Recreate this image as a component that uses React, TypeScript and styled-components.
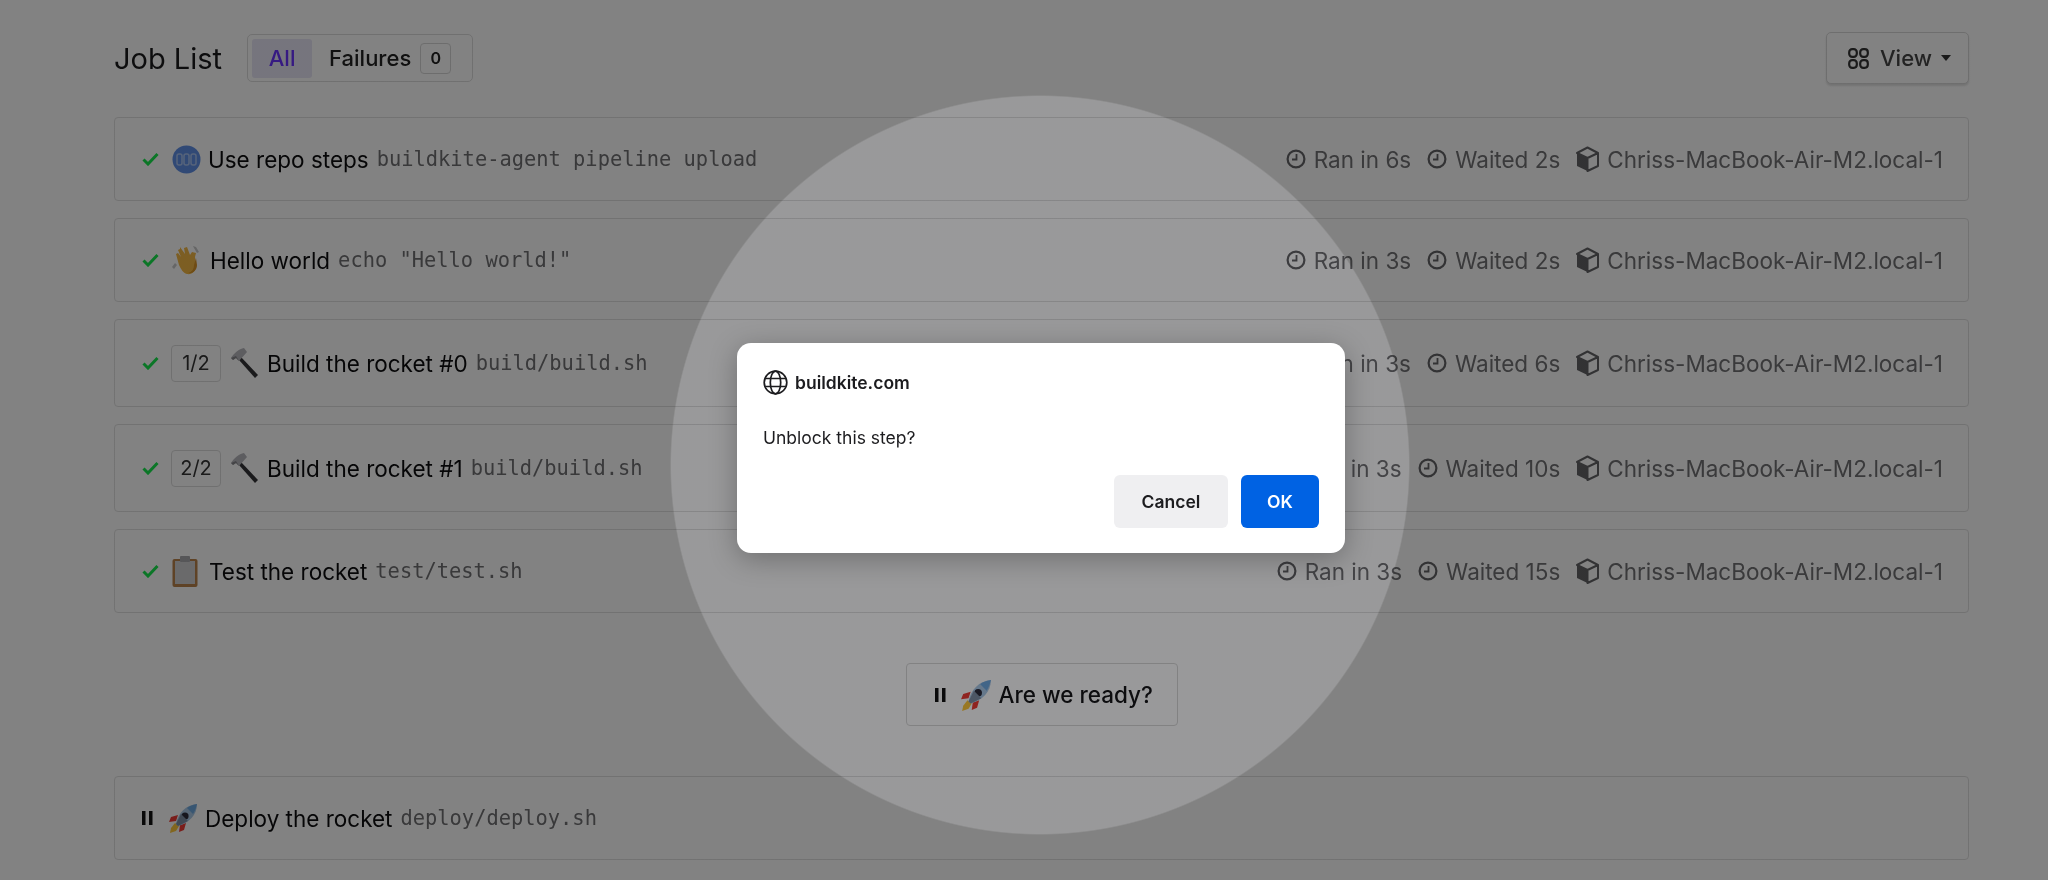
import React from "react";
import styled, { createGlobalStyle } from "styled-components";

const Global = createGlobalStyle`
  html, body { margin: 0; padding: 0; background: #fff; }
  * { box-sizing: border-box; }
`;

const Stage = styled.div`
  position: relative;
  width: 2048px;
  height: 880px;
  overflow: hidden;
  background: #fff;
  font-family: Inter, "Liberation Sans", sans-serif;
  color: #0c0c0e;
  filter: blur(0.55px);
`;

const Page = styled.main`
  display: flex;
  flex-direction: column;
  padding: 32px 79px 0 114px;
`;

const Header = styled.header`
  display: flex;
  align-items: center;
  height: 52px;
  margin-bottom: 33px;
`;

const Title = styled.h1`
  margin: 0 25px 0 0;
  font-size: 29px;
  font-weight: 400;
  line-height: 1;
  color: #1a1a1c;
`;

const Tabs = styled.div`
  display: flex;
  align-items: center;
  width: 226px;
  height: 48px;
  padding: 0 4px;
  border: 1px solid #dcdcdc;
  border-radius: 5px;
`;

const TabAll = styled.span`
  display: flex;
  align-items: center;
  justify-content: center;
  width: 60px;
  height: 39px;
  background: #e7e5f6;
  border-radius: 3px;
  color: #6a32ff;
  font-size: 22px;
  font-weight: 500;
`;

const TabLabel = styled.span`
  margin-left: 17px;
  font-size: 22px;
  font-weight: 500;
  color: #222;
`;

const CountBadge = styled.span`
  display: flex;
  align-items: center;
  justify-content: center;
  width: 31px;
  height: 31px;
  margin-left: 9px;
  border: 1px solid #d6d6d6;
  border-radius: 4px;
  font-size: 16px;
  font-weight: 600;
  color: #222;
`;

const ViewButton = styled.button`
  display: flex;
  align-items: center;
  width: 143px;
  height: 52px;
  margin-left: auto;
  padding: 0 0 0 21px;
  background: #fff;
  border: 1px solid #d8d8d8;
  border-radius: 5px;
  box-shadow: 0 2px 2px rgba(0, 0, 0, 0.12);
  font: 500 22px Inter, "Liberation Sans", sans-serif;
  color: #444;
`;

const ViewLabel = styled.span`
  margin-left: 11px;
`;

const Caret = styled.span`
  width: 0;
  height: 0;
  margin-left: 9px;
  border-left: 5.5px solid transparent;
  border-right: 5.5px solid transparent;
  border-top: 6px solid #333;
`;

const List = styled.div`
  display: flex;
  flex-direction: column;
  gap: 17px;
`;

const Row = styled.div<{ $tall?: boolean }>`
  display: flex;
  align-items: center;
  height: ${(p) => (p.$tall ? 88 : 84)}px;
  padding: 0 25px 0 27px;
  border: 1px solid #e0e0e0;
  border-radius: 4px;
`;

const StepName = styled.span<{ $gap?: number }>`
  margin-left: ${(p) => p.$gap ?? 7}px;
  font-size: 22.5px;
  font-weight: 400;
  white-space: nowrap;
`;

const Command = styled.code`
  margin-left: 8px;
  font-family: "DejaVu Sans Mono", "Liberation Mono", monospace;
  font-size: 20.4px;
  color: #6f6f72;
  white-space: nowrap;
`;

const Counter = styled.span`
  display: flex;
  align-items: center;
  justify-content: center;
  width: 50px;
  height: 37px;
  margin: 0 9px 0 12px;
  border: 1px solid #dcdcdc;
  border-radius: 4px;
  font-size: 20px;
  color: #333;
`;

const Meta = styled.div`
  display: flex;
  align-items: center;
  margin-left: auto;
  color: #717174;
  font-size: 22.5px;
  white-space: nowrap;
`;

const MetaItem = styled.span`
  display: flex;
  align-items: center;
  gap: 8px;
  margin-left: 16px;
`;

const EmojiSlot = styled.span<{ $left: number }>`
  display: flex;
  margin-left: ${(p) => p.$left}px;
`;

const Center = styled.div`
  display: flex;
  justify-content: center;
  margin: 50px 0;
`;

const BlockButton = styled.button`
  display: flex;
  align-items: center;
  width: 272px;
  height: 63px;
  padding: 0 0 0 28px;
  background: #fff;
  border: 1px solid #d8d8d8;
  border-radius: 4px;
  font: 500 22.5px Inter, "Liberation Sans", sans-serif;
  color: #151517;
`;

const BlockLabel = styled.span`
  margin-left: 7px;
  white-space: nowrap;
`;

const Backdrop = styled.div`
  position: absolute;
  inset: 0;
  background: radial-gradient(
    circle 370px at 1040px 465px,
    rgba(0, 0, 3, 0.4) 99.6%,
    rgba(0, 0, 0, 0.49) 100%
  );
`;

const Dialog = styled.section`
  position: absolute;
  left: 737px;
  top: 343px;
  width: 608px;
  height: 210px;
  display: flex;
  flex-direction: column;
  padding: 26px;
  background: #fff;
  border-radius: 14px;
  box-shadow: 0 6px 28px rgba(0, 0, 0, 0.28);
  color: #1c1c1f;
`;

const DialogHead = styled.div`
  display: flex;
  align-items: center;
  gap: 7px;
  height: 27px;
  font-size: 17.5px;
  font-weight: 600;
`;

const DialogText = styled.p`
  margin: 28px 0 0;
  font-size: 17.5px;
  line-height: 28px;
`;

const DialogActions = styled.div`
  display: flex;
  justify-content: flex-end;
  gap: 13px;
  margin-top: auto;
  margin-bottom: -1px;
`;

const DialogButton = styled.button<{ $primary?: boolean }>`
  height: 53px;
  width: ${(p) => (p.$primary ? 78 : 114)}px;
  border: 0;
  border-radius: 6px;
  background: ${(p) => (p.$primary ? "#0062e3" : "#efeff1")};
  color: ${(p) => (p.$primary ? "#fff" : "#1c1c1f")};
  font: 600 17.5px Inter, "Liberation Sans", sans-serif;
`;

const Check = () => (
  <svg width="17" height="14" viewBox="0 0 17 14" fill="none">
    <path d="M1.5 7.5 6 12 15.5 2" stroke="#16e84c" strokeWidth="3" />
  </svg>
);

const Pause = () => (
  <svg width="11" height="14" viewBox="0 0 11 14" fill="#111">
    <rect x="0" y="0" width="3.5" height="14" />
    <rect x="7" y="0" width="3.5" height="14" />
  </svg>
);

const Clock = () => (
  <svg width="20" height="20" viewBox="0 0 20 20" fill="none" stroke="#636366" strokeWidth="2.2">
    <circle cx="10" cy="10" r="8.4" />
    <path d="M10.5 5v5.5H6" strokeWidth="1.8" />
  </svg>
);

const Cube = () => (
  <svg width="23" height="26" viewBox="0 0 23 26">
    <path d="M11.5 12 1 7v13l10.5 5z" fill="#636366" />
    <path d="M11.5 12 22 7v13l-10.5 5zM1 7l10.5-5.5L22 7l-10.5 5z" fill="none" stroke="#636366" strokeWidth="2" strokeLinejoin="round" />
  </svg>
);

const GridIcon = () => (
  <svg width="21" height="21" viewBox="0 0 21 21" fill="none" stroke="#333" strokeWidth="2.2">
    <rect x="1.2" y="1.2" width="7.6" height="7.6" rx="3" />
    <rect x="12.2" y="1.2" width="7.6" height="7.6" rx="3" />
    <rect x="1.2" y="12.2" width="7.6" height="7.6" rx="3" />
    <rect x="12.2" y="12.2" width="7.6" height="7.6" rx="3" />
  </svg>
);

const Globe = () => (
  <svg width="25" height="25" viewBox="0 0 25 25" fill="none" stroke="#1c1c1f" strokeWidth="1.7">
    <circle cx="12.5" cy="12.5" r="11.3" />
    <ellipse cx="12.5" cy="12.5" rx="5.2" ry="11.3" />
    <path d="M2.2 8.5h20.6M2.2 16.5h20.6" />
  </svg>
);

const PipelineEmoji = () => (
  <svg width="29" height="29" viewBox="0 0 29 29">
    <circle cx="14.5" cy="14.5" r="14" fill="#5f8fe6" />
    <g fill="none" stroke="#a9c3f0" strokeWidth="1.5">
      <rect x="5" y="9" width="5" height="11" rx="2" />
      <rect x="12" y="9" width="5" height="11" rx="2" />
      <rect x="19" y="9" width="5" height="11" rx="2" />
    </g>
  </svg>
);

const WaveEmoji = () => (
  <svg width="30" height="30" viewBox="0 0 30 30">
    <path d="M3 18l-3 4 2 2 3-4zM21 1l3 1 3 5-2 1-3-5z" fill="#c8c8c8" />
    <path d="M8 2l5 7-1-6 3-1 3 8 2-3 4 1-1 4 1 9c0 5-4 9-9 8-4-1-6-5-8-9L4 9l2-1 3 4-3-7 2-1z" fill="#f4b844" />
    <path d="M22 20c0 4-2 7-6 8 5 1 9-3 9-8l-1-7z" fill="#d99428" />
  </svg>
);

const HammerEmoji = () => (
  <svg width="30" height="30" viewBox="0 0 30 30">
    <path d="M11 9l17 18-3 3L9 12z" fill="#333336" />
    <path d="M1 10C4 5 9 1 14 0l3 4-8 9-3-3-3 2z" fill="#b6b6bc" />
    <path d="M1 10l5-2 3 5-3-3-3 2z" fill="#85858a" />
  </svg>
);

const ClipboardEmoji = () => (
  <svg width="26" height="31" viewBox="0 0 26 31">
    <rect x="0.5" y="3" width="25" height="28" rx="2" fill="#b9824a" />
    <rect x="3" y="5" width="20" height="23" fill="#cfcfd1" />
    <rect x="8" y="0" width="10" height="6" rx="1" fill="#a9a9ad" />
  </svg>
);

const RocketEmoji = ({ size = 30 }: { size?: number }) => (
  <svg width={size} height={size} viewBox="0 0 30 30">
    <path d="M7 20 3 25l-1 5 6-2 3-5z" fill="#ffc83a" />
    <path d="M10 12 3 14l-2 5 7-1zM18 20l-2 7-5 2 1-7z" fill="#ef3b34" />
    <path d="M8 21C10 10 18 2 29 1c0 11-8 19-19 22z" fill="#a9c8e6" />
    <path d="M29 1c-5 1-8 2-10 4l6 6c2-3 3-6 4-10z" fill="#6da8e0" />
    <circle cx="17" cy="13" r="3.6" fill="#2b2b3a" />
    <path d="M8 21l2 2 10-5-7-7z" fill="#7e8fa5" />
  </svg>
);

type Job = {
  emoji: React.ReactNode;
  name: string;
  cmd: string;
  ran: string;
  waited: string;
  counter?: string;
  gap?: number;
  tall?: boolean;
};

const jobs: Job[] = [
  { emoji: <PipelineEmoji />, name: "Use repo steps", cmd: "buildkite-agent pipeline upload", ran: "Ran in 6s", waited: "Waited 2s" },
  { emoji: <WaveEmoji />, name: "Hello world", cmd: 'echo "Hello world!"', ran: "Ran in 3s", waited: "Waited 2s", gap: 8 },
  { emoji: <HammerEmoji />, name: "Build the rocket #0", cmd: "build/build.sh", ran: "Ran in 3s", waited: "Waited 6s", counter: "1/2", tall: true },
  { emoji: <HammerEmoji />, name: "Build the rocket #1", cmd: "build/build.sh", ran: "Ran in 3s", waited: "Waited 10s", counter: "2/2", tall: true },
  { emoji: <ClipboardEmoji />, name: "Test the rocket", cmd: "test/test.sh", ran: "Ran in 3s", waited: "Waited 15s", gap: 11 },
];

const AGENT = "Chriss-MacBook-Air-M2.local-1";

export default function App() {
  return (
    <>
      <Global />
      <Stage>
        <Page>
          <Header>
            <Title>Job List</Title>
            <Tabs>
              <TabAll>All</TabAll>
              <TabLabel>Failures</TabLabel>
              <CountBadge>0</CountBadge>
            </Tabs>
            <ViewButton>
              <GridIcon />
              <ViewLabel>View</ViewLabel>
              <Caret />
            </ViewButton>
          </Header>
          <List>
            {jobs.map((j) => (
              <Row key={j.name} $tall={j.tall}>
                <Check />
                {j.counter ? <Counter>{j.counter}</Counter> : <EmojiSlot $left={13}>{j.emoji}</EmojiSlot>}
                {j.counter && j.emoji}
                <StepName $gap={j.gap}>{j.name}</StepName>
                <Command>{j.cmd}</Command>
                <Meta>
                  <MetaItem><Clock />{j.ran}</MetaItem>
                  <MetaItem><Clock />{j.waited}</MetaItem>
                  <MetaItem><Cube />{AGENT}</MetaItem>
                </Meta>
              </Row>
            ))}
          </List>
          <Center>
            <BlockButton>
              <Pause />
              <EmojiSlot $left={14}><RocketEmoji size={32} /></EmojiSlot>
              <BlockLabel>Are we ready?</BlockLabel>
            </BlockButton>
          </Center>
          <Row>
            <Pause />
            <EmojiSlot $left={15}><RocketEmoji /></EmojiSlot>
            <StepName>Deploy the rocket</StepName>
            <Command>deploy/deploy.sh</Command>
          </Row>
        </Page>
        <Backdrop />
        <Dialog>
          <DialogHead>
            <Globe />
            buildkite.com
          </DialogHead>
          <DialogText>Unblock this step?</DialogText>
          <DialogActions>
            <DialogButton>Cancel</DialogButton>
            <DialogButton $primary>OK</DialogButton>
          </DialogActions>
        </Dialog>
      </Stage>
    </>
  );
}
